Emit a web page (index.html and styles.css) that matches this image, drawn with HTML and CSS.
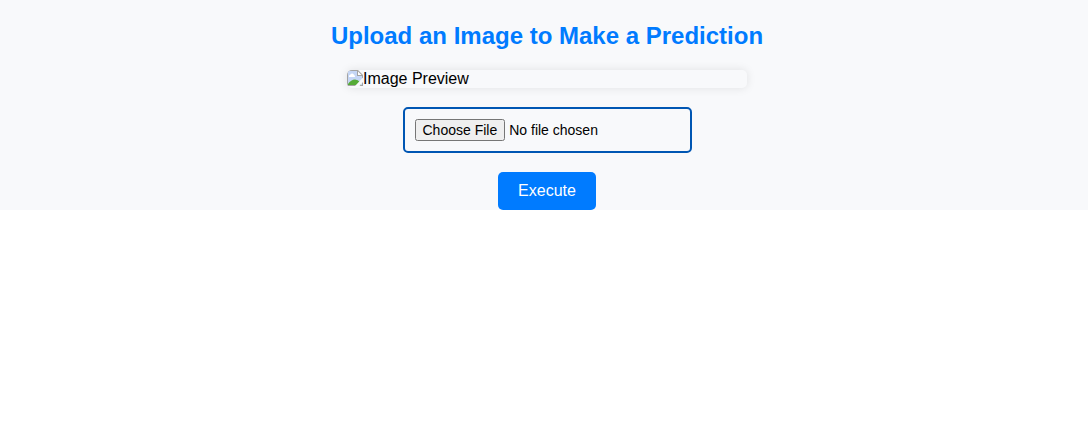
FILE: index.html
```html
<!DOCTYPE html>
<html lang="en">
<head>
<meta charset="utf-8">
<meta name="viewport" content="width=device-width, initial-scale=1">
<title>Image Prediction</title>
<link rel="stylesheet" href="styles.css">
</head>
<body>
<main class="upload">
  <h2 class="upload-title" id="title">Upload an Image to Make a Prediction</h2>
  <div class="preview">
    <svg class="preview-icon" width="16" height="16" viewBox="0 0 16 16" aria-hidden="true">
      <path d="M0 0H11L16 5V16H0Z" fill="#a3a3a3"/>
      <path d="M1 1H10V6H15V15H1Z" fill="#c5d6f5"/>
      <path d="M11 1.500V5H14.500Z" fill="#fff"/>
      <path d="M2 7V6Q2 5 3 5Q4 3 5.500 3.500Q7 4 7 5Q8 5 8 7Z" fill="#fff"/>
      <path d="M1 15V14Q4 9.500 8 9.500Q11 9.500 13 12L14 15Z" fill="#55ab37"/>
      <path d="M16 7.500L8 16H12.500L16 12Z" fill="#f8f9fb"/>
    </svg>
    <span>Image Preview</span>
  </div>
  <input class="file-input" type="file" accept="image/*" aria-labelledby="title">
  <button class="execute" type="button">Execute</button>
</main>
</body>
</html>
```
FILE: styles.css
```css
body {
  margin: 0;
  background: #fff;
  font-family: "Liberation Sans", Arial, sans-serif;
}

.upload {
  display: flex;
  flex-direction: column;
  align-items: center;
  padding: 22px 0 0 6px;
  background: #f8f9fb;
}

.upload-title {
  margin: 0 0 20px;
  color: #007bff;
  font-size: 24px;
  line-height: 28px;
}

.preview {
  display: flex;
  align-items: flex-start;
  box-sizing: border-box;
  width: 100%;
  max-width: 400px;
  overflow: hidden;
  border-radius: 5px;
  box-shadow: 0 0 10px rgba(0, 0, 0, 0.1);
  font-size: 16px;
  line-height: 18px;
}

.file-input {
  box-sizing: border-box;
  width: 289px;
  max-width: 100%;
  margin: 19px 0;
  padding: 10px;
  border: 2px solid #0056b3;
  border-radius: 5px;
  color: #000;
  font-family: inherit;
  font-size: 14px;
}

.execute {
  padding: 10px 20px;
  border: 0;
  border-radius: 5px;
  background: #007bff;
  color: #fff;
  font-family: inherit;
  font-size: 16px;
  line-height: 18px;
}
```
